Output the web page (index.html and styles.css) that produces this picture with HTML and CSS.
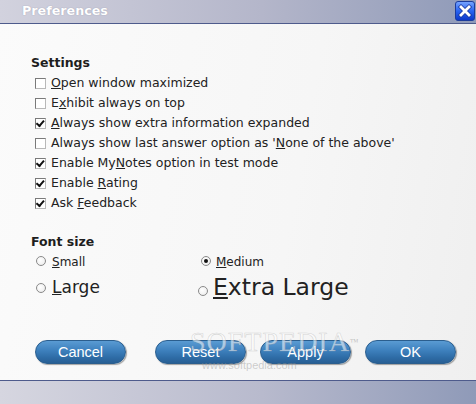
FILE: index.html
```html
<!DOCTYPE html>
<html>
<head>
<meta charset="utf-8">
<link rel="stylesheet" href="styles.css">
</head>
<body>
<div class="window">
  <div class="titlebar">
    <span class="title">Preferences</span>
    <span class="close">
      <svg width="20" height="20" viewBox="0 0 20 20">
        <defs>
          <linearGradient id="cg" x1="0" y1="0" x2="0" y2="1">
            <stop offset="0" stop-color="#79a6ff"/>
            <stop offset="0.5" stop-color="#2a64f0"/>
            <stop offset="1" stop-color="#0a36c8"/>
          </linearGradient>
        </defs>
        <rect x="0.5" y="0.5" width="19" height="19" rx="2.5" fill="url(#cg)" stroke="#1c3c9c"/>
        <path d="M6 6 L14 14 M14 6 L6 14" stroke="#1a3aa0" stroke-width="4.4" stroke-linecap="square"/>
        <path d="M6 6 L14 14 M14 6 L6 14" stroke="#ffffff" stroke-width="2.8" stroke-linecap="square"/>
      </svg>
    </span>
  </div>
  <div class="content">
    <div class="heading">Settings</div>
    <ul class="checks">
      <li><span class="cb"></span><span><u>O</u>pen window maximized</span></li>
      <li><span class="cb"></span><span>E<u>x</u>hibit always on top</span></li>
      <li><span class="cb on"></span><span><u>A</u>lways show extra information expanded</span></li>
      <li><span class="cb"></span><span>Always show last answer option as '<u>N</u>one of the above'</span></li>
      <li><span class="cb on"></span><span>Enable My<u>N</u>otes option in test mode</span></li>
      <li><span class="cb on"></span><span>Enable <u>R</u>ating</span></li>
      <li><span class="cb on"></span><span>Ask <u>F</u>eedback</span></li>
    </ul>
    <div class="heading fs">Font size</div>
    <div class="radios">
      <div class="r r-small"><span class="rb"></span><u>S</u>mall</div>
      <div class="r r-medium"><span class="rb on"></span><u>M</u>edium</div>
      <div class="r r-large"><span class="rb"></span><u>L</u>arge</div>
      <div class="r r-xl"><span class="rb"></span><u>E</u>xtra Large</div>
    </div>
    <div class="buttons">
      <button class="btn">Cancel</button>
      <button class="btn gap">Reset</button>
      <button class="btn">Apply</button>
      <button class="btn">OK</button>
    </div>
    <div class="watermark">SOFTPEDIA<sup>™</sup><div class="wm-url">www.softpedia.com</div></div>
  </div>
  <div class="bottombar"></div>
</div>
</body>
</html>
```

FILE: styles.css
```css
html, body {
  margin: 0;
  padding: 0;
}
body {
  width: 476px;
  height: 404px;
  overflow: hidden;
  font-family: "DejaVu Sans", Verdana, sans-serif;
  color: #222;
}
.window {
  display: flex;
  flex-direction: column;
  height: 404px;
  background: linear-gradient(100deg, #fbfbfb 0%, #f6f6f6 60%, #efefef 100%);
}
.titlebar {
  height: 23px;
  border-bottom: 1px solid #4e5b8c;
  background: linear-gradient(90deg, #d2d2de 0%, #b4b6ca 55%, #8f9ab8 100%);
  display: flex;
  justify-content: space-between;
  align-items: flex-start;
  box-sizing: content-box;
}
.title {
  color: #ffffff;
  font-weight: bold;
  font-size: 12.7px;
  line-height: 20px;
  padding-left: 22px;
  padding-top: 1px;
  text-shadow: 0 0 1px rgba(90,90,120,0.5);
}
.close {
  display: block;
  width: 20px;
  height: 20px;
  margin-top: 1px;
  margin-right: 1px;
}
.close svg { display: block; }
.content {
  flex: 1;
  position: relative;
  padding: 29px 0 0 31px;
  font-size: 12.5px;
}
.heading {
  font-weight: bold;
  font-size: 12.5px;
  line-height: 20px;
  color: #1e1e1e;
}
.heading.fs {
  margin-top: 19px;
}
.checks {
  list-style: none;
  margin: 0;
  padding: 0 0 0 4px;
}
.checks li {
  display: flex;
  align-items: center;
  height: 20px;
  line-height: 20px;
}
.cb {
  width: 9px;
  height: 9px;
  border: 1px solid #7a7a7a;
  border-right-color: #b8b8b8;
  border-bottom-color: #b8b8b8;
  background: #ffffff;
  margin-right: 5px;
  position: relative;
  flex: none;
}
.cb.on::after {
  content: "";
  position: absolute;
  left: 1px;
  top: -1px;
  width: 3px;
  height: 6px;
  border: solid #111;
  border-width: 0 2px 2px 0;
  transform: rotate(40deg) translate(1px, 0);
}
.radios {
  display: grid;
  grid-template-columns: 162px auto;
  grid-template-rows: 20px 30px;
  padding-left: 5px;
}
.r {
  font-size: 12px;
  line-height: 20px;
  white-space: nowrap;
}
.r-large {
  font-size: 17px;
  line-height: 30px;
}
.r-xl {
  font-size: 23.5px;
  line-height: 30px;
}
.rb {
  display: inline-block;
  width: 8px;
  height: 8px;
  border: 1px solid #8a8a8a;
  border-radius: 50%;
  background: radial-gradient(circle at 40% 40%, #ffffff 0%, #f2f2f2 60%, #dcdcdc 100%);
  margin-right: 6px;
  vertical-align: baseline;
  position: relative;
  font-size: 12px;
}
.r-medium .rb { margin-left: 3px; margin-right: 5px; }
.r-xl .rb { margin-right: 5px; margin-bottom: -1px; }
.rb.on::after {
  content: "";
  position: absolute;
  left: 2px;
  top: 2px;
  width: 4px;
  height: 4px;
  border-radius: 50%;
  background: #111;
}
.buttons {
  display: flex;
  gap: 14px;
  margin-top: 38px;
  padding-left: 4px;
}
.btn {
  width: 91px;
  height: 24px;
  border-radius: 12px;
  border: 1px solid #2b5e8e;
  background: linear-gradient(180deg, #5a9bd3 0%, #3f82bf 40%, #2e6ca6 75%, #285f94 100%);
  color: #ffffff;
  font-family: "Liberation Sans", Arial, sans-serif;
  font-size: 14.5px;
  padding: 0;
  line-height: 22px;
  box-shadow: 1px 1px 1px rgba(0,0,0,0.35);
}
.btn.gap { margin-left: 15px; }
.watermark {
  position: absolute;
  left: 190px;
  top: 303px;
  font-family: "Liberation Serif", serif;
  font-size: 28px;
  letter-spacing: 1px;
  color: rgba(255,255,255,0.55);
  -webkit-text-stroke: 0.6px rgba(170,170,170,0.45);
  pointer-events: none;
  line-height: 30px;
}
.watermark sup {
  font-size: 9px;
  -webkit-text-stroke: 0;
  color: rgba(160,160,160,0.6);
  vertical-align: top;
}
.wm-url {
  font-family: "Liberation Sans", sans-serif;
  font-size: 11px;
  letter-spacing: 0;
  -webkit-text-stroke: 0;
  color: rgba(150,150,150,0.45);
  margin-left: 12px;
  line-height: 12px;
  margin-top: 2px;
}
.bottombar {
  height: 23px;
  border-top: 1px solid #4e5b8c;
  background: linear-gradient(90deg, #d6d6e0 0%, #b8bacd 55%, #8f9ab8 100%);
  flex: none;
}
```
